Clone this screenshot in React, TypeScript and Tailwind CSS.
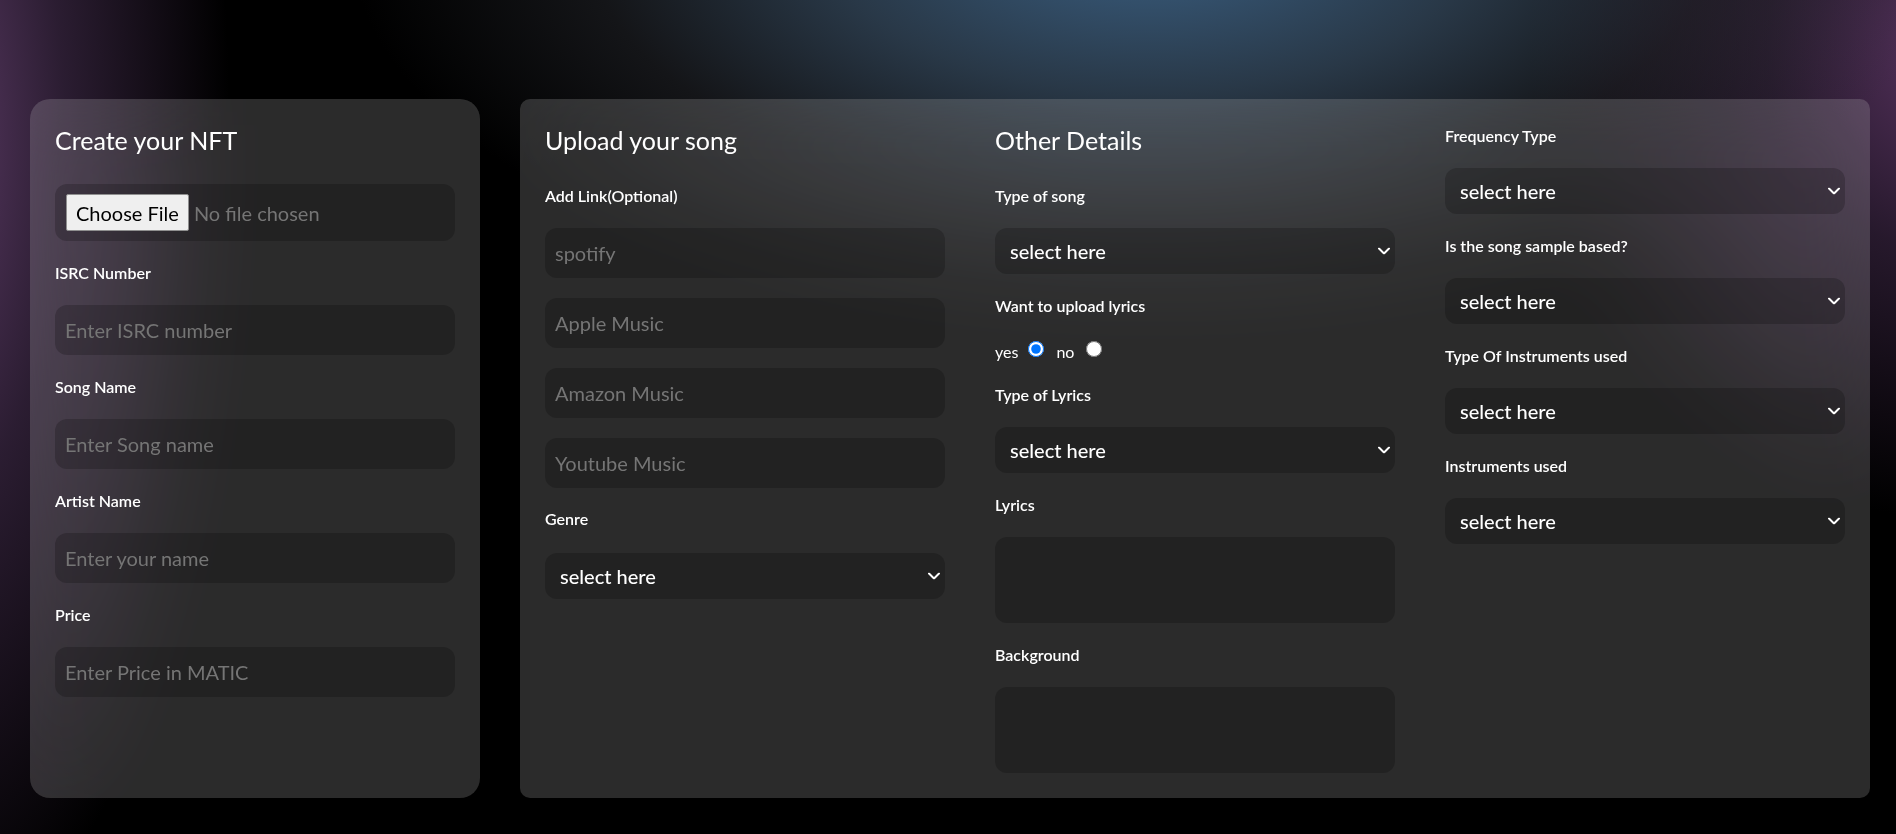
import type { ReactNode } from 'react';

// ─── shared styles ────────────────────────────────────────────────────────────

const labelCls = 'block text-[16px] leading-[19px] font-semibold text-white mb-[23px]';
const inputCls =
  'block w-[400px] h-[50px] rounded-xl bg-black/20 px-[10px] text-[20px] text-white placeholder:text-[#757575] outline-none';
const areaCls = 'block w-[400px] h-[86px] rounded-xl bg-black/20 px-[10px] py-2 text-[18px] text-white outline-none resize-none';

function Label({ children }: { children: ReactNode }) {
  return <label className={labelCls}>{children}</label>;
}

function Chevron() {
  return (
    <svg width="12" height="7" viewBox="0 0 12 7" className="pointer-events-none absolute right-[5px] top-1/2 -translate-y-1/2">
      <polyline points="1,1 6,6 11,1" fill="none" stroke="#ffffff" strokeWidth="2" strokeLinecap="round" strokeLinejoin="round" />
    </svg>
  );
}

function Select({ className = '' }: { className?: string }) {
  return (
    <div className={`relative w-[400px] ${className}`}>
      <select className="block w-full h-[46px] appearance-none rounded-xl bg-black/20 pl-[15px] pr-8 text-[20px] font-medium text-white outline-none">
        <option className="bg-[#2c2c2c]">select here</option>
      </select>
      <Chevron />
    </div>
  );
}

function Title({ children, className = '' }: { children: ReactNode; className?: string }) {
  return <h2 className={`mt-[2px] text-[25px] leading-[31px] text-white ${className}`}>{children}</h2>;
}

// ─── left card ────────────────────────────────────────────────────────────────

function CreateCard() {
  return (
    <div className="w-[450px] h-[699px] shrink-0 rounded-[20px] bg-white/[0.17] backdrop-blur-2xl px-[25px] pt-[24px]">
      <Title className="mb-[28px]">Create your NFT</Title>

      <div className="flex items-center w-[400px] h-[57px] rounded-xl bg-black/20 px-[11px] mb-[22px]">
        <span className="h-[37px] px-[9px] flex items-center rounded-[2px] border border-[#8f8f8f] bg-[#efefef] text-[20px] text-black">
          Choose File
        </span>
        <span className="ml-[5px] text-[20px] text-[#757575]">No file chosen</span>
      </div>

      <Label>ISRC Number</Label>
      <input className={`${inputCls} mb-[22px]`} placeholder="Enter ISRC number" />

      <Label>Song Name</Label>
      <input className={`${inputCls} mb-[22px]`} placeholder="Enter Song name" />

      <Label>Artist Name</Label>
      <input className={`${inputCls} mb-[22px]`} placeholder="Enter your name" />

      <Label>Price</Label>
      <input className={inputCls} placeholder="Enter Price in MATIC" />
    </div>
  );
}

// ─── right card ───────────────────────────────────────────────────────────────

function UploadColumn() {
  return (
    <div className="w-[400px]">
      <Title className="mb-[30px]">Upload your song</Title>
      <Label>Add Link(Optional)</Label>
      <div className="flex flex-col gap-[20px] mb-[21px]">
        <input className={inputCls} placeholder="spotify" />
        <input className={inputCls} placeholder="Apple Music" />
        <input className={inputCls} placeholder="Amazon Music" />
        <input className={inputCls} placeholder="Youtube Music" />
      </div>
      <label className="block text-[16px] leading-[19px] font-semibold text-white mb-[25px]">Genre</label>
      <Select />
    </div>
  );
}

function DetailsColumn() {
  return (
    <div className="w-[400px]">
      <Title className="mb-[30px]">Other Details</Title>
      <Label>Type of song</Label>
      <Select className="mb-[22px]" />

      <Label>Want to upload lyrics</Label>
      <div className="flex items-center h-[22px] mb-[25px] text-[16px] text-white">
        <span className="leading-none pt-[6px]">yes</span>
        <input type="radio" name="lyrics" defaultChecked className="ml-[10px] w-4 h-4 m-0" />
        <span className="ml-[12px] leading-none pt-[6px]">no</span>
        <input type="radio" name="lyrics" className="ml-[12px] w-4 h-4 m-0" />
      </div>

      <Label>Type of Lyrics</Label>
      <Select className="mb-[22px]" />

      <Label>Lyrics</Label>
      <textarea className={`${areaCls} mb-[22px]`} />

      <Label>Background</Label>
      <textarea className={areaCls} />
    </div>
  );
}

function ExtraColumn() {
  return (
    <div className="w-[400px] pt-[3px]">
      <Label>Frequency Type</Label>
      <Select className="mb-[22px]" />
      <Label>Is the song sample based?</Label>
      <Select className="mb-[22px]" />
      <Label>Type Of Instruments used</Label>
      <Select className="mb-[22px]" />
      <Label>Instruments used</Label>
      <Select />
    </div>
  );
}

// ─── page ─────────────────────────────────────────────────────────────────────

export default function App() {
  return (
    <div
      className="min-h-[834px] w-full bg-black bg-[radial-gradient(ellipse_800px_380px_at_1150px_-60px,#3a5f82_0%,rgba(48,66,84,0.85)_40%,rgba(40,42,48,0.5)_70%,transparent_100%),radial-gradient(ellipse_430px_480px_at_1960px_40px,#5a3462_0%,rgba(70,45,80,0.55)_45%,transparent_100%),radial-gradient(ellipse_300px_820px_at_-70px_140px,#5e3c68_0%,rgba(66,44,76,0.65)_45%,transparent_100%)] font-[family-name:Lato,sans-serif] flex gap-[40px] pl-[30px] pt-[99px] pb-[36px]"
    >
      <CreateCard />
      <div className="w-[1350px] h-[699px] shrink-0 rounded-[10px] bg-white/[0.17] backdrop-blur-2xl px-[25px] pt-[24px] flex gap-[50px]">
        <UploadColumn />
        <DetailsColumn />
        <ExtraColumn />
      </div>
    </div>
  );
}
